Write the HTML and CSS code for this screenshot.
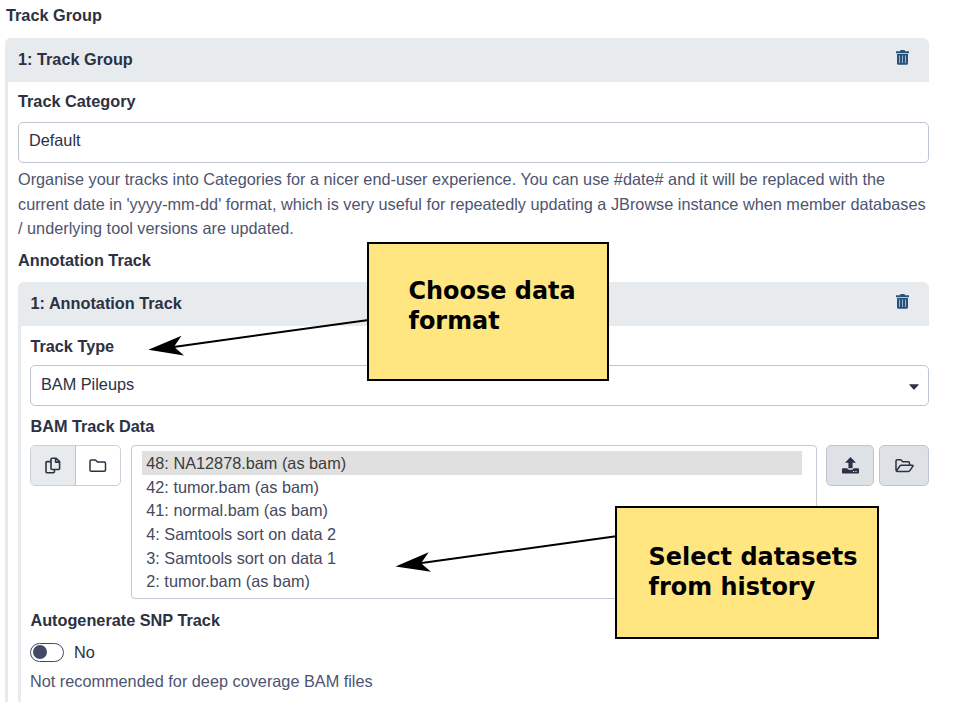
FILE: index.html
```html
<!DOCTYPE html>
<html lang="en">
<head>
<meta charset="utf-8">
<title>Track Group</title>
<link rel="stylesheet" href="styles.css">
</head>
<body>
<svg width="0" height="0" class="defs">
  <symbol id="trash" viewBox="0 0 13 15">
    <path d="M0 1.300h3.800L4.600 0h3.800L9.200 1.300H13v1.900H0zM1 4h11v9.300q0 1.500-1.500 1.500h-8Q1 14.800 1 13.300z" fill="#25537b"/>
    <path d="M3.500 5.500v7.500M6.500 5.500v7.500M9.500 5.500v7.500" stroke="#9fb4c5" stroke-width="1"/>
  </symbol>
</svg>
<main class="form">
  <div class="label">Track Group</div>
  <section class="card">
    <header class="card-head"><span>1: Track Group</span><svg class="trash"><use href="#trash"/></svg></header>
    <div class="card-body">
      <div class="label category">Track Category</div>
      <div class="input">Default</div>
      <p class="help">Organise your tracks into Categories for a nicer end-user experience. You can use #date# and it will be replaced with the<br>current date in 'yyyy-mm-dd' format, which is very useful for repeatedly updating a JBrowse instance when member databases<br>/ underlying tool versions are updated.</p>
      <div class="label annotation">Annotation Track</div>
      <section class="card">
        <header class="card-head"><span>1: Annotation Track</span><svg class="trash"><use href="#trash"/></svg></header>
        <div class="card-body">
          <div class="label type">Track Type</div>
          <div class="input select"><span>BAM Pileups</span><svg class="caret" viewBox="0 0 10 6"><path d="M.8.2h8.400q1 0 .3.900L5.700 5.200q-.7.700-1.400 0L.5 1.100Q-.2.200.8.200z" fill="#2c3143"/></svg></div>
          <div class="label data">BAM Track Data</div>
          <div class="data-row">
            <div class="group">
              <div class="seg on"><svg width="16" height="18" viewBox="0 0 16 18" fill="none" stroke="#2c3143" stroke-width="1.600" stroke-linejoin="round"><path d="M7 1.200h4.200L14.600 4.600v6.900q0 1-1 1H7q-1 0-1-1V2.200q0-1 1-1zM10.600 1.400v3.700h3.700M5.800 4.600H2q-1 0-1 1v9.200q0 1 1 1h6.400q1 0 1-1v-2"/></svg></div>
              <div class="seg"><svg width="18" height="14" viewBox="0 0 18 14" fill="none" stroke="#2c3143" stroke-width="1.500" stroke-linejoin="round"><path d="M2.200 1h4.300l2 2h6.700q1.300 0 1.300 1.200v6.900q0 1.200-1.300 1.200h-13Q1 12.300 1 11.100V2.200Q1 1 2.200 1z"/></svg></div>
            </div>
            <div class="list">
              <div class="option picked">48: NA12878.bam (as bam)</div>
              <div class="option">42: tumor.bam (as bam)</div>
              <div class="option">41: normal.bam (as bam)</div>
              <div class="option">4: Samtools sort on data 2</div>
              <div class="option">3: Samtools sort on data 1</div>
              <div class="option">2: tumor.bam (as bam)</div>
            </div>
            <div class="btn upload"><svg width="17" height="17" viewBox="0 0 17 17" fill="#2c3143"><path d="M8.500 0L14 5.700h-3.400v5.600H6.400V5.700H3zM.8 11.200h4.400q.4 1.700 3.300 1.700t3.300-1.700h4.400q.8 0 .8.800v3.700q0 .8-.8.800H.8q-.8 0-.8-.8V12q0-.8.800-.8z"/><path d="M11 14h1.200v1.100H11zM13.400 14h1.200v1.100h-1.200z" fill="#dee2e6"/></svg></div>
            <div class="btn browse"><svg width="19" height="14" viewBox="0 0 19 14" fill="none" stroke="#2c3143" stroke-width="1.500" stroke-linejoin="round"><path d="M1 11V2q0-1.200 1.200-1.200h3.600l2 2h5.500q1.200 0 1.200 1.200v2M1.300 12.100L4.700 7.200Q5.200 6.200 6.400 6.200h10.800q1.300 0 .7 1l-2.700 4q-.8 1.200-2 1.200H2q-1 0-1-1.400"/></svg></div>
          </div>
          <div class="label snp">Autogenerate SNP Track</div>
          <div class="switch-row"><span class="switch"></span><span>No</span></div>
          <p class="help snp-help">Not recommended for deep coverage BAM files</p>
        </div>
      </section>
    </div>
  </section>
</main>
<svg class="arrows" width="954" height="702" viewBox="0 0 954 702">
  <path d="M368.500 320L170 347.500M616 536.300L418 563.500" stroke="#000" stroke-width="2"/>
  <path d="M148.300 349.800L181.500 335.700L174 346.700L184 355.500zM395.500 566.500L428.700 552.200L421 563.300L431 571.700z"/>
</svg>
<div class="note note-format">Choose data<br>format</div>
<div class="note note-history">Select datasets<br>from history</div>
</body>
</html>
```

FILE: styles.css
```css
* { box-sizing: border-box; }
html, body { margin: 0; height: 702px; overflow: hidden; }
body {
  position: relative;
  background: #fff;
  color: #2c3143;
  font-family: "Liberation Sans", Arial, sans-serif;
  font-size: 16.28px;
  line-height: 24px;
}
.defs { position: absolute; }
.form { width: 929px; padding: 3px 0 0 5px; }
.form > .label { height: 35px; padding-left: 1px; }
.label { font-weight: bold; height: 24px; }
.card {
  border-left: 3px solid #e8ebee;
  border-radius: 6px 6px 0 0;
}
.card-head {
  display: flex;
  justify-content: space-between;
  align-items: center;
  height: 44px;
  margin-left: -3px;
  padding: 0 20px 2px 13px;
  background: #e8ebee;
  border-radius: 6px 6px 0 0;
  font-weight: bold;
}
.trash { width: 13px; height: 15px; margin-bottom: 3px; }
.card-body { padding-left: 10px; }
.category { padding-top: 7px; height: 40px; }
.input {
  height: 41px;
  padding: 5px 10px;
  border: 1px solid #bdc6d0;
  border-radius: 5px;
}
.help {
  margin: 4px 0 0;
  line-height: 24.5px;
  color: #4d5470;
  white-space: nowrap;
}
.annotation { margin-top: 7.5px; height: 34px; }
.card .card .card-head { padding-left: 12.500px; }
.card .card .card-body { padding-left: 9px; padding-bottom: 20px; }
.card .card .label { padding-left: 0.400px; }
.type { padding-top: 8px; height: 39px; }
.select { display: flex; justify-content: space-between; padding-top: 6px; }
.caret { width: 10px; height: 6px; margin-top: 12px; margin-right: -1px; }
.data { margin-top: 8px; height: 31px; }
.data-row { display: flex; align-items: flex-start; height: 154px; }
.group {
  display: flex;
  width: 91px;
  height: 41px;
  border: 1px solid #c8d0da;
  border-radius: 5px;
  overflow: hidden;
}
.seg { flex: 1; display: flex; align-items: center; justify-content: center; }
.seg.on { background: #e8ebee; border-right: 1px solid #bdc6d0; }
.list {
  width: 687px;
  height: 154px;
  margin-left: 10px;
  padding: 5px 14px 0 10px;
  border: 1px solid #c3cad6;
  border-radius: 4px;
  color: #444a60;
}
.option { height: 23.700px; line-height: 24px; padding-left: 4.400px; }
.picked { background: #e0e0e0; color: #3c3c3c; }
.btn {
  display: flex;
  align-items: center;
  justify-content: center;
  height: 41px;
  background: #dee2e6;
  border: 1px solid #bdc6d0;
  border-radius: 5px;
}
.upload { width: 48px; margin-left: 9px; }
.browse { width: 50px; margin-left: 5px; }
.snp { margin-top: 9px; height: 32px; }
.switch-row { display: flex; align-items: center; gap: 10px; height: 24px; }
.switch {
  width: 34px;
  height: 19px;
  padding: 1.5px 2px;
  border: 1px solid #444a66;
  border-radius: 10px;
}
.switch::before {
  content: "";
  display: block;
  width: 14px;
  height: 14px;
  border-radius: 50%;
  background: #444a66;
}
.snp-help { margin-top: 5px; }
.arrows { position: absolute; left: 0; top: 0; }
.note {
  position: absolute;
  background: #ffe680;
  border: 2px solid #000;
  color: #000;
  font: bold 23.950px/30px "DejaVu Sans", sans-serif;
  white-space: nowrap;
}
.note-format { left: 367px; top: 242px; width: 242px; height: 139px; padding: 32px 0 0 39.500px; }
.note-history { left: 615px; top: 506px; width: 264px; height: 133px; padding: 34px 0 0 31.500px; }
```
